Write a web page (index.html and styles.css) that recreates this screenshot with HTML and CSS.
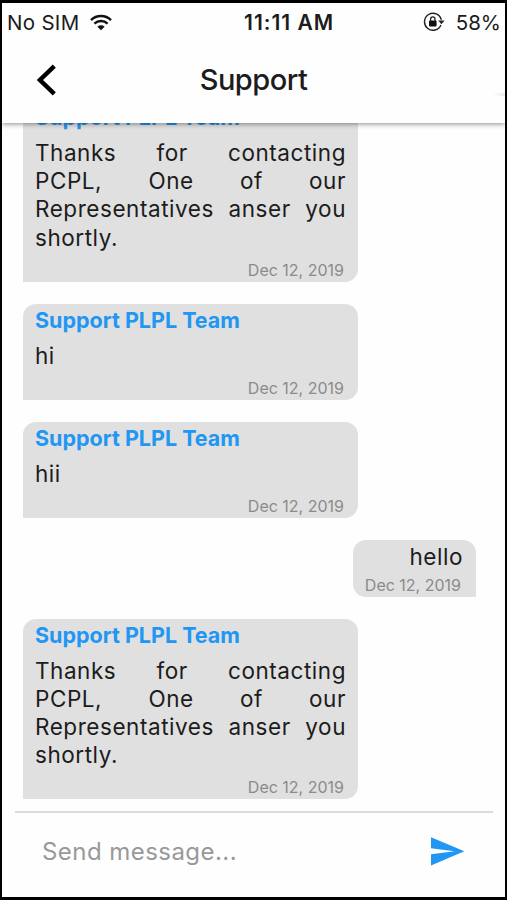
FILE: index.html
```
<!DOCTYPE html>
<html lang="en">
  <head>
    <meta charset="UTF-8" />
    <meta name="viewport" content="width=device-width, initial-scale=1.0" />
    <title>Support</title>
    <link rel="stylesheet" href="styles.css">
  </head>
  <body>
    <div class="screen">
      <header class="header">
        <div class="status-bar">
          <div class="carrier">
            <span>No SIM</span>
            <svg width="22" height="17" viewBox="0 0 22 17" fill="none" stroke="#111" stroke-width="2.4">
              <path d="M1 6.1a14.2 14.2 0 0 1 20 0" />
              <path d="M4.4 9.7a9.4 9.4 0 0 1 13.2 0" />
              <path d="M11 16.3l-3.6-3.5a5.2 5.2 0 0 1 7.2 0z" fill="#111" stroke="none" />
            </svg>
          </div>
          <span class="clock">11:11 AM</span>
          <div class="battery">
            <svg width="22" height="20" viewBox="0 0 22 20" fill="none" stroke="#222">
              <path d="M17.9 12.9a8.5 8.5 0 1 1 .4-5" stroke-width="1.4" />
              <path d="M15.2 8.4h6.4l-3.2 3.8z" fill="#222" stroke="none" />
              <rect x="6" y="8.6" width="7.6" height="5.8" rx="0.8" fill="#111" stroke="none" />
              <path d="M7.6 9V7a2.2 2.2 0 0 1 4.4 0v2" stroke-width="1.3" />
            </svg>
            <span>58%</span>
          </div>
        </div>
        <div class="nav">
          <button class="back" aria-label="Back">
            <svg width="20" height="32" viewBox="0 0 20 32" fill="none" stroke="#000" stroke-width="4.4">
              <path d="M17.3 2.2L3 16l14.3 13.8" />
            </svg>
          </button>
          <h1>Support</h1>
          <span class="edge"></span>
        </div>
      </header>

      <main class="messages">
        <div class="message received">
          <p class="name">Support PLPL Team</p>
          <p class="text">Thanks for contacting PCPL, One of our Representatives anser you shortly.</p>
          <p class="date">Dec 12, 2019</p>
        </div>
        <div class="message received">
          <p class="name">Support PLPL Team</p>
          <p class="text">hi</p>
          <p class="date">Dec 12, 2019</p>
        </div>
        <div class="message received">
          <p class="name">Support PLPL Team</p>
          <p class="text">hii</p>
          <p class="date">Dec 12, 2019</p>
        </div>
        <div class="message sent">
          <p class="text">hello</p>
          <p class="date">Dec 12, 2019</p>
        </div>
        <div class="message received">
          <p class="name">Support PLPL Team</p>
          <p class="text">Thanks for contacting PCPL, One of our Representatives anser you shortly.</p>
          <p class="date">Dec 12, 2019</p>
        </div>
      </main>

      <form class="composer">
        <input type="text" placeholder="Send message..." />
        <button type="button" class="send" aria-label="Send">
          <svg width="34" height="29" viewBox="0 0 34 29" fill="#2196f3">
            <path d="M0 0.3L33.3 14.3L0 28.5V17.3L23.5 14.3L0 11.3z" />
          </svg>
        </button>
      </form>
    </div>
  </body>
</html>
```

FILE: styles.css
```
* {
  box-sizing: border-box;
}

body {
  margin: 0;
  font-family: Inter, "Liberation Sans", sans-serif;
  color: #1c1c1c;
  background-color: #000;
}

h1,
p {
  margin: 0;
}

button {
  padding: 0;
  border: none;
  background: none;
  cursor: pointer;
}

svg {
  display: block;
}

.screen {
  display: flex;
  flex-direction: column;
  height: 900px;
  border: solid #000;
  border-width: 3px 2px 3px 2px;
  background-color: #fefefe;
}

.header {
  height: 120px;
  z-index: 1;
  background-color: #fefefe;
  box-shadow: 0 1px 5px rgba(0, 0, 0, 0.45);
}

.status-bar {
  display: flex;
  justify-content: space-between;
  align-items: center;
  height: 38px;
  padding: 0 4px 0 5px;
  font-size: 20.5px;
}

.carrier,
.battery {
  display: flex;
  align-items: center;
  gap: 11px;
}

.carrier {
  letter-spacing: 0.3px;
}

.clock {
  padding-left: 43px;
  font-size: 21px;
  font-weight: 600;
  letter-spacing: 1px;
}

.nav {
  display: grid;
  grid-template-columns: 60px 1fr 60px;
  align-items: center;
  height: 77px;
}

.back {
  padding-left: 35px;
}

h1 {
  font-size: 29px;
  font-weight: 500;
  letter-spacing: -0.5px;
  text-align: center;
}

.edge {
  justify-self: end;
  width: 12px;
  height: 3px;
  margin-top: 30px;
  background: linear-gradient(to right, #fefefe, #ececec);
}

.messages {
  flex: 1;
  display: flex;
  flex-direction: column;
  justify-content: flex-end;
  gap: 21.8px;
  min-height: 0;
  padding: 0 29.5px 11.6px 21px;
  overflow: hidden;
}

.message {
  flex-shrink: 0;
  background-color: #e0e0e0;
}

.received {
  align-self: flex-start;
  width: 335px;
  padding: 2px 12px;
  border-radius: 13px 13px 13px 0;
}

.sent {
  align-self: flex-end;
  padding: 3px 12.5px 2px 12px;
  border-radius: 13px 13px 0 13px;
  text-align: right;
}

.name {
  margin-bottom: 8px;
  font-size: 21.5px;
  font-weight: 700;
  line-height: 28px;
  color: #2196f3;
}

.text {
  font-size: 22.5px;
  line-height: 28.2px;
  letter-spacing: 0.55px;
}

.received .text {
  margin-bottom: 8px;
  text-align: justify;
}

.sent .text {
  margin-bottom: 4px;
}

.date {
  padding-right: 2px;
  font-size: 16px;
  line-height: 20px;
  text-align: right;
  color: #8b8b8b;
}

.composer {
  display: flex;
  align-items: center;
  height: 86px;
  margin: 0 12px 0 13px;
  padding: 0 28px 8px 27px;
  border-top: 2px solid #dcdcdc;
}

.composer input {
  flex: 1;
  min-width: 0;
  padding: 0;
  border: none;
  outline: none;
  font-family: inherit;
  font-size: 24px;
  letter-spacing: 0.45px;
  background: none;
}

.composer input::placeholder {
  color: #999;
}
```
